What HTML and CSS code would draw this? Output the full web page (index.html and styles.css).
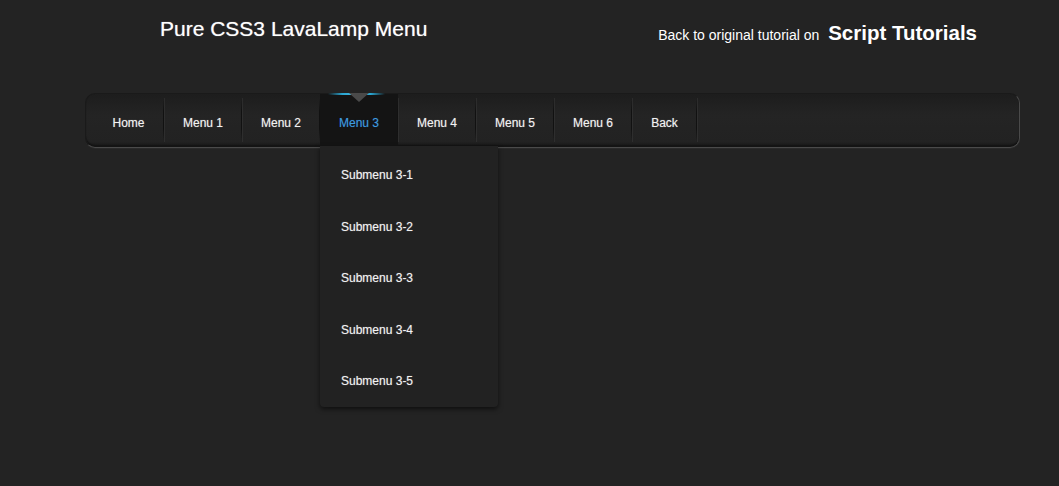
FILE: index.html
```html
<!DOCTYPE html>
<html lang="en">
<head>
    <meta charset="UTF-8">
    <title>Pure CSS3 LavaLamp Menu</title>
    <link rel="stylesheet" href="styles.css">
</head>
<body>
<header class="top">
    <h2 class="title">Pure CSS3 LavaLamp Menu</h2>
    <div class="back">Back to original tutorial on <a href="#">Script Tutorials</a></div>
</header>
<nav class="lavalamp">
    <ul class="menu">
        <li class="first"><a href="#">Home</a></li>
        <li><a href="#">Menu 1</a></li>
        <li><a href="#">Menu 2</a></li>
        <li class="current">
            <a href="#">Menu 3</a>
            <ul class="sub">
                <li><a href="#">Submenu 3-1</a></li>
                <li><a href="#">Submenu 3-2</a></li>
                <li><a href="#">Submenu 3-3</a></li>
                <li><a href="#">Submenu 3-4</a></li>
                <li><a href="#">Submenu 3-5</a></li>
            </ul>
        </li>
        <li><a href="#">Menu 4</a></li>
        <li><a href="#">Menu 5</a></li>
        <li><a href="#">Menu 6</a></li>
        <li class="last"><a href="#">Back</a></li>
    </ul>
</nav>
</body>
</html>
```

FILE: styles.css
```css
html, body {
    height: 100%;
}
body {
    margin: 0;
    min-height: 486px;
    background-color: #232323;
    font-family: Arial, "Liberation Sans", sans-serif;
    color: #fff;
}
a {
    text-decoration: none;
}
.top {
    display: flex;
    justify-content: space-between;
    align-items: flex-start;
    padding: 17px 82px 0 160px;
    height: 31px;
}
.title {
    margin: 0;
    font-size: 21px;
    font-weight: normal;
    color: #fff;
    text-shadow: 0 0 1px #aaa;
}
.back {
    margin-top: 4px;
    font-size: 14px;
    color: #fff;
}
.back a {
    margin-left: 5px;
    font-size: 20.5px;
    font-weight: bold;
    color: #fff;
}
.lavalamp {
    margin: 45px 0 0 85px;
    width: 933px;
    height: 53px;
    border: 1px solid #1a1a1a;
    border-right-color: #4a4a4a;
    border-bottom-color: #4a4a4a;
    border-radius: 10px;
    background: linear-gradient(#1d1d1d, #242424 40%, #222 90%, #161616);
    box-shadow: 0 1px 0 #2a2a2a, inset 0 -2px 1px #141414;
}
.menu {
    display: flex;
    margin: 0;
    padding: 0;
    list-style: none;
}
.menu > li {
    position: relative;
    width: 78px;
}
.menu > li.last {
    width: 65px;
}
.menu > li::after {
    content: "";
    position: absolute;
    right: 0;
    top: 4px;
    height: 44px;
    width: 1px;
    background: linear-gradient(rgba(0,0,0,0), #111 30%, #111 70%, rgba(0,0,0,0));
    box-shadow: 1px 0 0 rgba(70,70,70,0.35);
}
.menu > li > a {
    display: block;
    height: 52px;
    line-height: 58px;
    text-align: center;
    font-size: 12px;
    color: #f2f2f2;
    text-shadow: 0 0 1px #888;
}
.menu > li.first > a {
    padding-left: 7px;
}
.menu > li.current > a {
    background-color: #141414;
    color: #3d9be0;
    text-shadow: 0 0 1px #246;
}
.menu > li.current::before {
    content: "";
    position: absolute;
    top: -1px;
    left: 8px;
    right: 13px;
    height: 2px;
    background: linear-gradient(90deg, rgba(40,160,210,0), #2aa6d2 25%, #46b8e0 50%, #2aa6d2 75%, rgba(40,160,210,0));
    filter: blur(0.6px);
}
.menu > li.current > a::before {
    content: "";
    position: absolute;
    top: -1px;
    left: 29px;
    border-left: 10px solid transparent;
    border-right: 10px solid transparent;
    border-top: 9px solid #4a4a4a;
}
.sub {
    position: absolute;
    top: 52px;
    left: 0;
    width: 178px;
    margin: 0;
    padding: 3px 0 0;
    list-style: none;
    background-color: #222;
    border-radius: 0 0 4px 4px;
    box-shadow: 0 2px 5px rgba(0,0,0,0.6);
    z-index: 2;
}
.sub li a {
    display: block;
    padding-left: 21px;
    height: 51.5px;
    line-height: 53px;
    font-size: 12px;
    color: #f2f2f2;
    text-shadow: 0 0 1px #888;
}
```
